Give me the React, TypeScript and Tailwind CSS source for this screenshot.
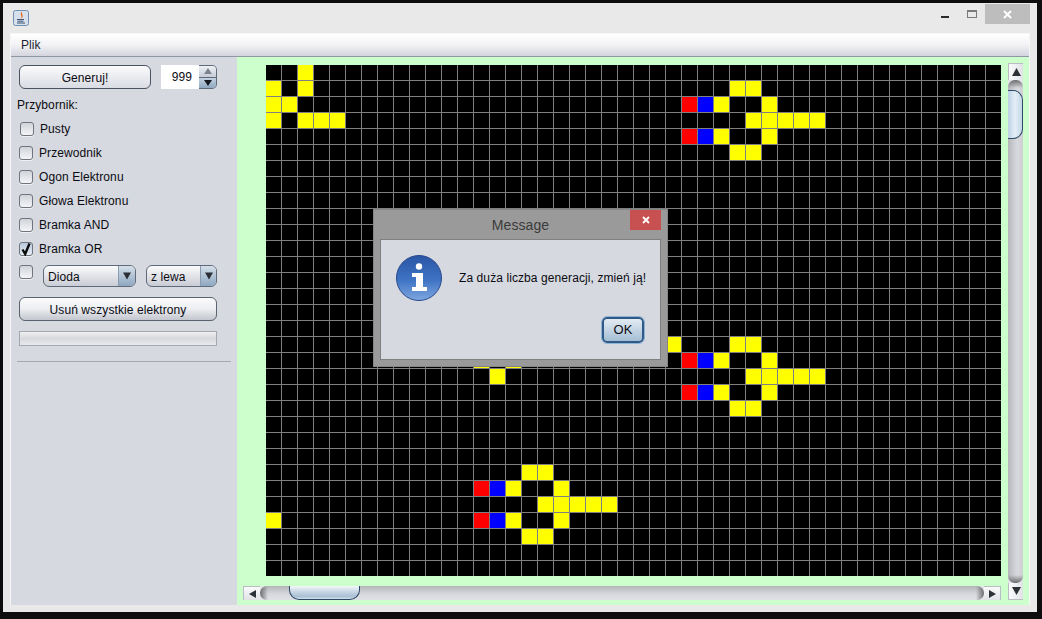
const COLS = 46
const ROWS = 32

const YELLOW: [number, number[]][] = [
  [0, [2]],
  [1, [0, 2, 29, 30]],
  [2, [0, 1, 28, 31]],
  [3, [0, 2, 3, 4, 30, 31, 32, 33, 34]],
  [4, [28, 31]],
  [5, [29, 30]],
  [17, [25, 29, 30]],
  [18, [13, 15, 28, 31]],
  [19, [14, 30, 31, 32, 33, 34]],
  [20, [28, 31]],
  [21, [29, 30]],
  [25, [16, 17]],
  [26, [15, 18]],
  [27, [17, 18, 19, 20, 21]],
  [28, [0, 15, 18]],
  [29, [16, 17]],
]
const RED: [number, number][] = [[2, 26], [4, 26], [18, 26], [20, 26], [26, 13], [28, 13]]
const BLUE: [number, number][] = [[2, 27], [4, 27], [18, 27], [20, 27], [26, 14], [28, 14]]

function cellColor(r: number, c: number) {
  if (RED.some(([a, b]) => a === r && b === c)) return 'bg-[#ff0000]'
  if (BLUE.some(([a, b]) => a === r && b === c)) return 'bg-[#0000ff]'
  if (YELLOW.some(([a, b]) => a === r && b.includes(c))) return 'bg-[#ffff00]'
  return 'bg-black'
}

const TOOLS = ['Pusty', 'Przewodnik', 'Ogon Elektronu', 'Głowa Elektronu', 'Bramka AND', 'Bramka OR']

function Checkbox({ checked = false }: { checked?: boolean }) {
  return (
    <span className={`relative block w-[14px] h-[14px] shrink-0 rounded-[3px] border border-[#6f747d] bg-linear-to-b shadow-[0_1px_0_#eef0f3] ${checked ? 'from-[#b9c9da] to-[#e6edf4]' : 'from-[#d0d3d9] to-[#f4f5f7]'}`}>
      {checked && (
        <svg viewBox="0 0 14 14" className="absolute -left-px -top-px w-[14px] h-[14px]">
          <path d="M3.5 7.5 L6.2 12 L10.5 1.5" fill="none" stroke="#0c0c0c" strokeWidth="2.4" />
        </svg>
      )}
    </span>
  )
}

function Combo({ label, width, arrow }: { label: string; width: string; arrow: string }) {
  return (
    <div className={`flex h-[22px] ${width} rounded-[6px] border border-[#5f6a7a] overflow-hidden bg-linear-to-b from-[#fbfbfc] to-[#c9ccd4]`}>
      <span className="flex-1 pl-[4px] leading-[23px]">{label}</span>
      <span className={`${arrow} flex items-center justify-center bg-linear-to-b from-[#d5dfe9] to-[#8ea8c0] border-l border-[#8a9bb0]`}>
        <svg viewBox="0 0 10 9" className="w-[8px] h-[8px]"><path d="M0 0H10L5 9Z" fill="#2a2f36" /></svg>
      </span>
    </div>
  )
}

function InfoIcon() {
  return (
    <svg viewBox="0 0 46 46" className="w-[46px] h-[46px] shrink-0">
      <defs>
        <linearGradient id="info" x1="0" y1="0" x2="0" y2="1">
          <stop offset="0" stopColor="#2a55a5" />
          <stop offset="0.55" stopColor="#3f74c4" />
          <stop offset="1" stopColor="#7fa7e0" />
        </linearGradient>
      </defs>
      <circle cx="23" cy="23" r="22.5" fill="url(#info)" stroke="#27488c" />
      <circle cx="23" cy="11.5" r="3.2" fill="#fff" />
      <path d="M16 18H27V32H31V36H16V32H20V22H16Z" fill="#fff" />
    </svg>
  )
}

export default function App() {
  return (
    <div className="relative w-[1042px] h-[619px] overflow-hidden bg-[#0d0d0d] pt-[3px] pl-[3px] pr-[5px] pb-[7px] font-['Liberation_Sans',sans-serif] text-[12px] tracking-[0.09px] text-[#0b0b12]">
      <div className="h-full flex flex-col bg-[#e9e9e9]">
        {/* title bar */}
        <div className="h-[30px] shrink-0 flex items-start pl-[10px] pr-[7px]">
          <svg viewBox="0 0 16 16" className="w-[16px] h-[16px] mt-[7px]">
            <rect x="0.5" y="0.5" width="15" height="15" rx="2" fill="#d5e0ec" stroke="#6f8fb3" />
            <path d="M9 1.5C5.5 4.5 10.5 6 7.5 9C12 6.5 8 4.5 9 1.5Z" fill="#e8641b" />
            <path d="M4 9.5H11M4.5 11.2H10.5M4 13H12" stroke="#3f5370" strokeWidth="1" />
          </svg>
          <div className="flex-1" />
          <span className="block w-[8px] h-[2px] mt-[13px] mr-[18px] bg-[#2b2b2b]" />
          <span className="block w-[10px] h-[8px] mt-[7px] mr-[8px] border border-[#7b7b7b] border-t-2" />
          <span className="flex items-center justify-center w-[45px] h-[20px] mt-px bg-[#bdbdbd]">
            <svg viewBox="0 0 9 9" className="w-[9px] h-[9px]"><path d="M1 1L8 8M8 1L1 8" stroke="#fff" strokeWidth="2" /></svg>
          </span>
        </div>

        {/* frame content */}
        <div className="flex-1 min-h-0 mx-[7px] mb-[7px] flex flex-col border-l border-t border-r border-[#f6f6f6]">
          <div className="h-[23px] shrink-0 pl-[10px] leading-[23px] bg-linear-to-b from-[#ffffff] via-[#f2f2f5] to-[#d3d4de] border-b border-[#8f97a3] text-[#1c2230]">Plik</div>

          <div className="flex-1 min-h-0 flex">
            {/* left toolbox */}
            <div className="w-[226px] shrink-0 bg-[#d6d9e0] pt-[8px]">
              <div className="flex pl-[8px] gap-[10px]">
                <button className="w-[132px] h-[24px] pt-px rounded-[6px] border border-[#4b5360] bg-linear-to-b from-[#fbfbfc] to-[#d9dce3]">Generuj!</button>
                <div className="flex w-[56px] h-[24px]">
                  <span className="w-[38px] bg-white text-right pr-[7px] leading-[25px]">999</span>
                  <div className="flex-1 flex flex-col rounded-r-[5px] overflow-hidden border border-l-0 border-[#5f6a7a]">
                    <span className="flex-1 flex items-center justify-center bg-linear-to-b from-[#eef1f5] to-[#c6ccd6] border-b border-[#5f6a7a]">
                      <svg viewBox="0 0 8 6" className="w-[8px] h-[6px]"><path d="M4 0L8 6H0Z" fill="#7c8492" /></svg>
                    </span>
                    <span className="flex-1 flex items-center justify-center bg-linear-to-b from-[#c3d2e1] to-[#8ea8c0]">
                      <svg viewBox="0 0 8 6" className="w-[8px] h-[6px]"><path d="M0 0H8L4 6Z" fill="#14181f" /></svg>
                    </span>
                  </div>
                </div>
              </div>

              <div className="pl-[6px] mt-[9px] h-[14px] leading-[14px]">Przybornik:</div>

              <div className="flex flex-col mt-[5px] pl-[8px]">
                {TOOLS.map((t, i) => (
                  <label key={t} className={`flex items-center h-[24px] gap-[6px] ${i === 0 ? 'pl-px' : ''}`}>
                    <Checkbox checked={t === 'Bramka OR'} />
                    <span>{t}</span>
                  </label>
                ))}
              </div>

              <div className="flex items-start pl-[8px] mt-[4px]">
                <Checkbox />
                <div className="ml-[10px]"><Combo label="Dioda" width="w-[93px]" arrow="w-[17px]" /></div>
                <div className="ml-[10px]"><Combo label="z lewa" width="w-[71px]" arrow="w-[16px]" /></div>
              </div>

              <button className="block ml-[8px] mt-[10px] w-[198px] h-[24px] pt-px rounded-[6px] border border-[#5a6270] bg-linear-to-b from-[#fbfbfc] via-[#eceef1] to-[#c3c6ce]">Usuń wszystkie elektrony</button>

              <div className="ml-[8px] mt-[10px] w-[198px] h-[15px] border border-[#a3a7af] bg-linear-to-b from-[#f0f0f2] via-[#d7d8dc] to-[#e9eaed]" />

              <div className="ml-[6px] mt-[15px] w-[214px] h-px bg-[#a5a8ae]" />
            </div>

            {/* canvas pane */}
            <div className="flex-1 min-w-0 flex bg-[#ccffcc] pt-[6px] pl-[6px]">
              <div className="w-[758px] shrink-0 flex flex-col">
                <div className="ml-[23px] mt-[2px] grid grid-cols-[repeat(46,15px)] grid-rows-[repeat(32,15px)] gap-px bg-[#808080] w-[735px] h-[511px]">
                  {Array.from({ length: ROWS * COLS }, (_, i) => (
                    <div key={i} className={cellColor(Math.floor(i / COLS), i % COLS)} />
                  ))}
                </div>
                {/* horizontal scrollbar */}
                <div className="mt-[10px] h-[14px] flex bg-[#e4e5e9]">
                  <span className="w-[17px] flex items-center justify-center bg-linear-to-b from-[#fbfbfc] to-[#e0e2e6] border-l border-t border-[#b9bcc2]">
                    <svg viewBox="0 0 7 8" className="w-[9px] h-[8px]"><path d="M7 0V8L0 4Z" fill="#2c3138" /></svg>
                  </span>
                  <div className="relative flex-1 rounded-[7px] bg-[linear-gradient(to_right,#6c6c6e,transparent_8px,transparent_calc(100%-8px),#6c6c6e),linear-gradient(to_bottom,#b4b6ba,#d8d9de_60%,#e0e1e6)]">
                    <div className="absolute left-[29px] top-0 w-[71px] h-[14px] rounded-b-[10px] border border-t-0 border-[#2f4a66] bg-[linear-gradient(to_bottom,#f4f7fa,#c6d6e4_45%,#a9c0d4_80%,#d0deea)]" />
                  </div>
                  <span className="w-[17px] flex items-center justify-center bg-linear-to-b from-[#fbfbfc] to-[#e0e2e6] border-r border-t border-[#b9bcc2]">
                    <svg viewBox="0 0 7 8" className="w-[9px] h-[8px]"><path d="M0 0V8L7 4Z" fill="#2c3138" /></svg>
                  </span>
                </div>
              </div>

              {/* vertical scrollbar */}
              <div className="ml-[7px] w-[15px] h-[537px] flex flex-col bg-[#e4e5e9]">
                <span className="h-[17px] flex items-center justify-center bg-linear-to-r from-[#fbfbfc] to-[#e0e2e6] border-l border-t border-[#b9bcc2]">
                  <svg viewBox="0 0 8 7" className="w-[9px] h-[8px]"><path d="M4 0L8 7H0Z" fill="#2c3138" /></svg>
                </span>
                <div className="relative flex-1 rounded-[7px] bg-[linear-gradient(to_bottom,#6c6c6e,transparent_8px,transparent_calc(100%-8px),#6c6c6e),linear-gradient(to_right,#b4b6ba,#d8d9de_60%,#cfd0d4)]">
                  <div className="absolute left-0 top-[10px] h-[49px] w-[15px] rounded-r-[10px] border border-l-0 border-[#2f4a66] bg-[linear-gradient(to_right,#bcd2e6,#e4eff7_50%,#c4d7e6)]" />
                </div>
                <span className="h-[17px] flex items-center justify-center bg-linear-to-r from-[#fbfbfc] to-[#e0e2e6] border-l border-b border-[#b9bcc2]">
                  <svg viewBox="0 0 8 7" className="w-[9px] h-[8px]"><path d="M0 0H8L4 7Z" fill="#2c3138" /></svg>
                </span>
              </div>
            </div>
          </div>
        </div>
      </div>

      {/* message dialog */}
      <div className="absolute left-[373px] top-[209px] w-[295px] h-[158px] bg-[#9a9a9a] border border-[#858585] flex flex-col">
        <div className="relative h-[29px] shrink-0 text-center text-[14px] leading-[30px] text-[#3a3a3a]">
          Message
          <span className="absolute right-[6px] top-0 w-[31px] h-[20px] flex items-center justify-center bg-[#c75050]">
            <svg viewBox="0 0 8 8" className="w-[8px] h-[8px]"><path d="M1 1L7 7M7 1L1 7" stroke="#fff" strokeWidth="1.8" /></svg>
          </span>
        </div>
        <div className="mx-[6px] h-[121px] border border-[#808080] bg-[#d6d9e0] flex flex-col">
          <div className="flex items-center pl-[15px] pt-[15px]">
            <InfoIcon />
            <span className="ml-[17px]">Za duża liczba generacji, zmień ją!</span>
          </div>
          <div className="flex justify-end pr-[16px] mt-[16px]">
            <button className="w-[42px] h-[26px] rounded-[5px] border-2 border-[#2f5a85] bg-linear-to-b from-[#e3ebf3] to-[#a4bed4] text-[13px] outline outline-[#8fb3d4]">OK</button>
          </div>
        </div>
      </div>
    </div>
  )
}
